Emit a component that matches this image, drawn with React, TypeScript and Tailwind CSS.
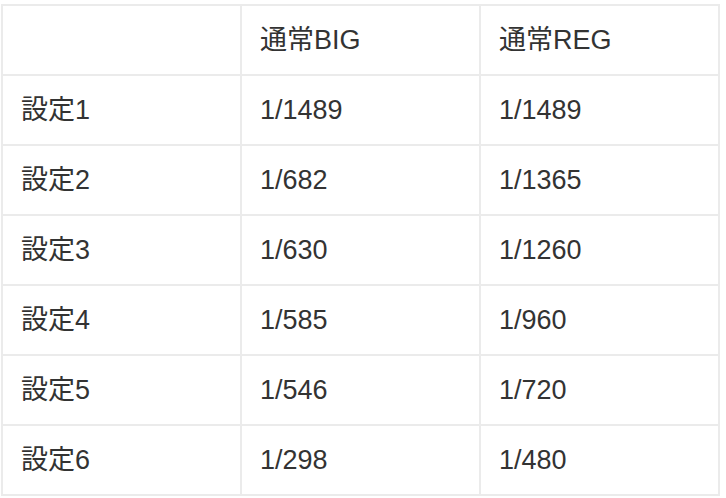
const rows: [string, string, string][] = [
  ["設定1", "1/1489", "1/1489"],
  ["設定2", "1/682", "1/1365"],
  ["設定3", "1/630", "1/1260"],
  ["設定4", "1/585", "1/960"],
  ["設定5", "1/546", "1/720"],
  ["設定6", "1/298", "1/480"],
];

const cell =
  "h-[70px] border-r-2 border-b-2 border-[#ebebeb] pl-[18px] pr-5 text-left align-middle font-normal";

export default function App() {
  return (
    <main
      className="min-h-screen bg-white pl-px pt-1 text-[27px] text-[#333333]"
      style={{ fontFamily: '"Liberation Sans", "Noto Sans CJK JP", sans-serif' }}
    >
      <table className="w-[719px] table-fixed border-separate border-spacing-0 border-t-2 border-l-2 border-[#ebebeb]">
        <thead>
          <tr>
            <th className={cell}></th>
            <th className={cell}>通常BIG</th>
            <th className={cell}>通常REG</th>
          </tr>
        </thead>
        <tbody>
          {rows.map(([label, big, reg]) => (
            <tr key={label}>
              <td className={cell}>{label}</td>
              <td className={cell}>{big}</td>
              <td className={cell}>{reg}</td>
            </tr>
          ))}
        </tbody>
      </table>
    </main>
  );
}
